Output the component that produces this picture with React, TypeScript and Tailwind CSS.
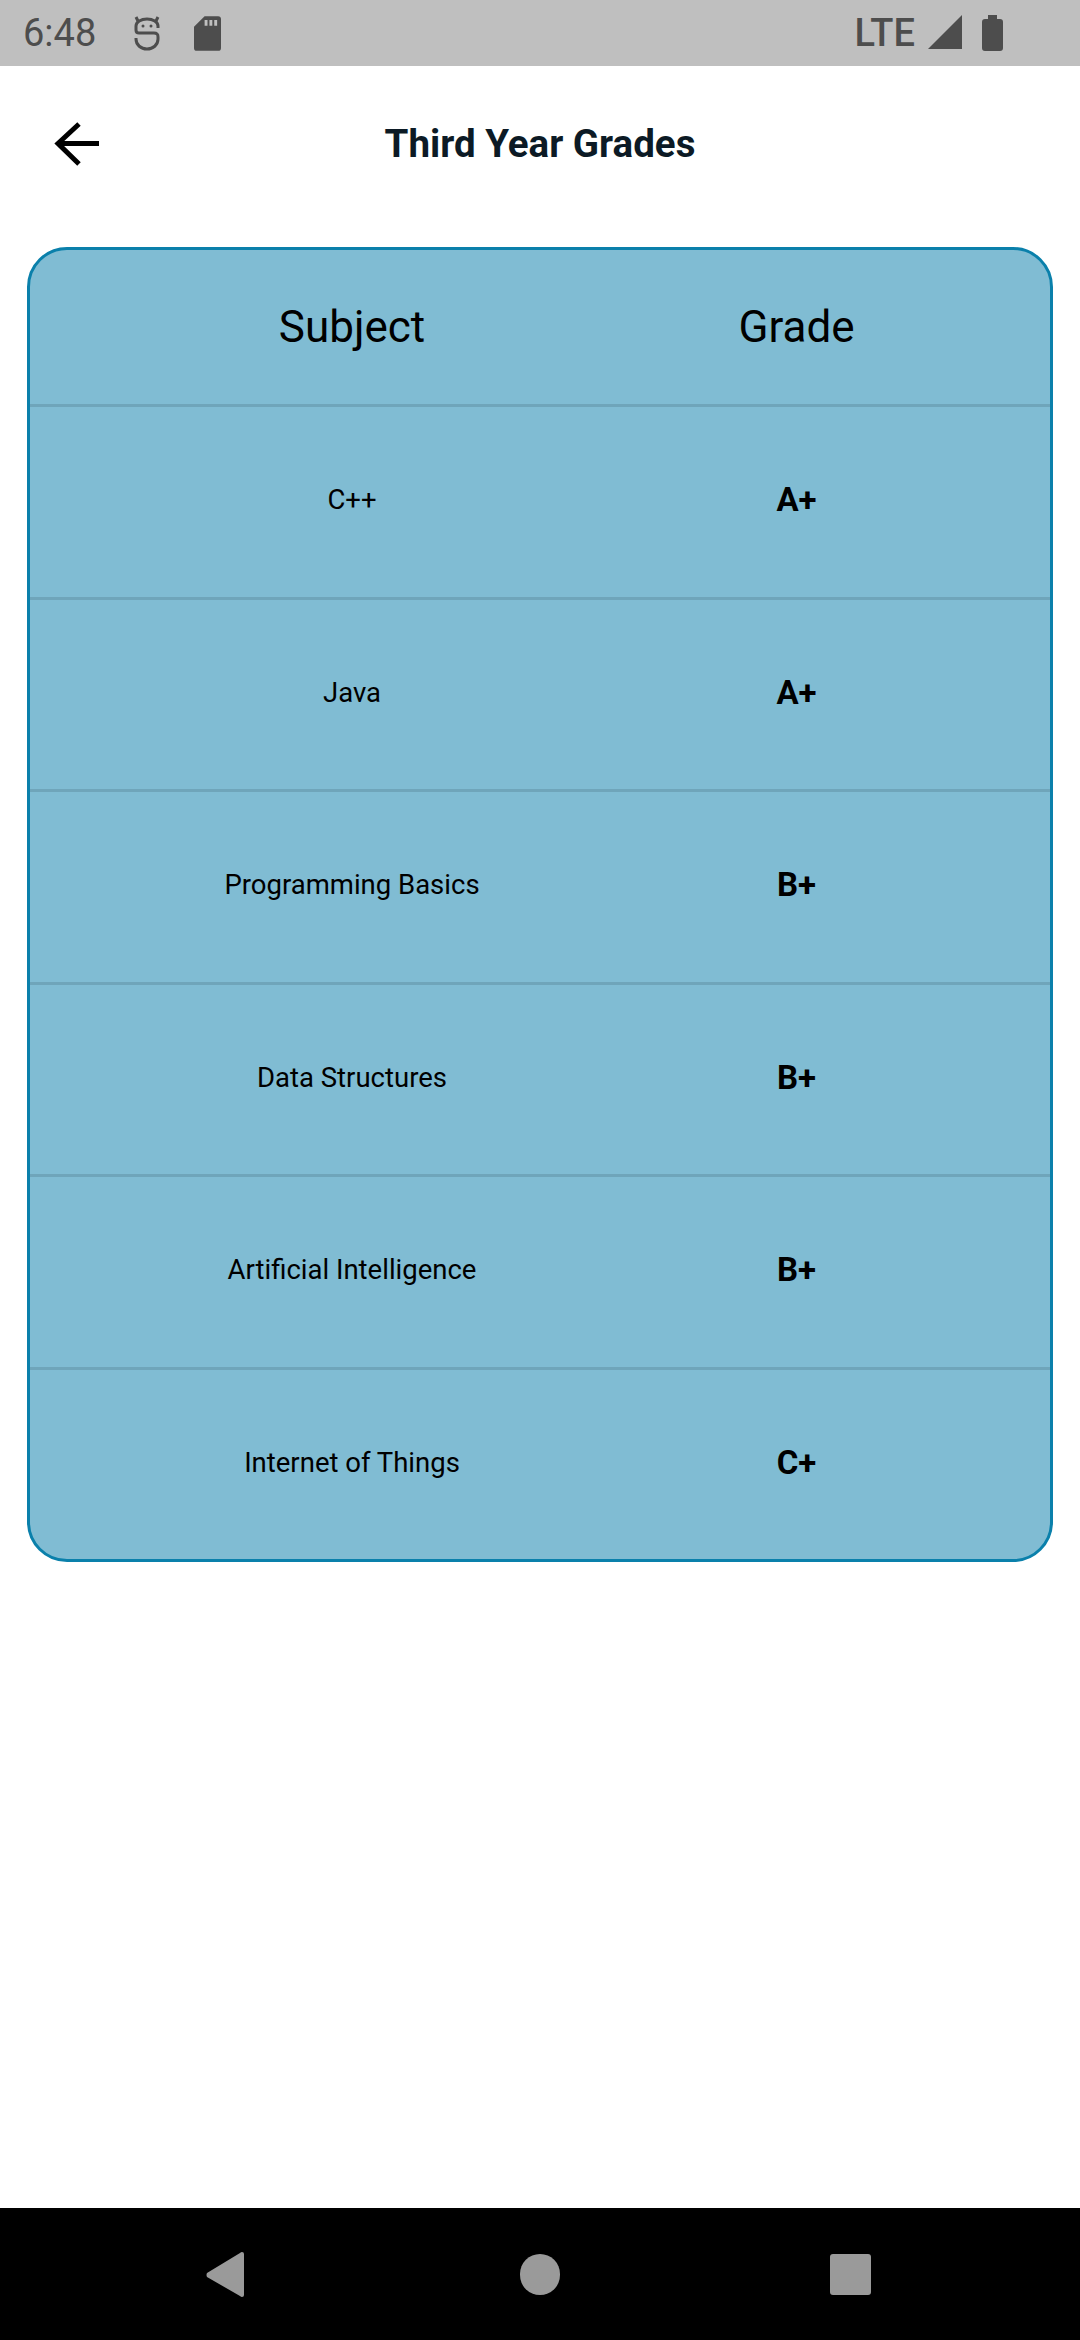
const ROWS = [
  { subject: "C++", grade: "A+" },
  { subject: "Java", grade: "A+" },
  { subject: "Programming Basics", grade: "B+" },
  { subject: "Data Structures", grade: "B+" },
  { subject: "Artificial Intelligence", grade: "B+" },
  { subject: "Internet of Things", grade: "C+" },
];

function StatusBar() {
  return (
    <div className="flex h-[66px] items-center bg-[#bfbfbf] text-[#4d4d4d]">
      <span className="ml-[23px] w-[76px] text-[38px] leading-none font-[Roboto]">6:48</span>
      <svg className="ml-[35px] h-[36px] w-[26px]" viewBox="0 0 26 36" fill="none" stroke="currentColor" strokeWidth="3">
        <path d="M24 13 V11 C24 7 19 4 13 4 C7 4 2 7 2 11 V15 C2 17 3 18 5 18 H20 C23 18 24 19 24 22 V24 C24 30 19 34 13 34 C7 34 2 30 2 24 V23" />
        <path d="M4 6 L2 2 M22 6 L24 2" />
        <circle cx="9" cy="11" r="1.500" fill="currentColor" stroke="none" />
        <circle cx="17" cy="11" r="1.500" fill="currentColor" stroke="none" />
      </svg>
      <svg className="ml-[34px] h-[35px] w-[27px]" viewBox="0 0 28 36" fill="currentColor">
        <path
          d="M11 0 H25 a3 3 0 0 1 3 3 V33 a3 3 0 0 1 -3 3 H3 a3 3 0 0 1 -3 -3 V11 Z M11 4 v6 h3 v-6 Z M16 4 v6 h3 v-6 Z M21 4 v6 h3 v-6 Z"
          fillRule="evenodd"
        />
      </svg>
      <span className="ml-auto text-[38px] leading-none font-medium font-[Roboto]">LTE</span>
      <svg className="ml-[13px] h-[36px] w-[34px]" viewBox="0 0 34 36" fill="currentColor">
        <path d="M34 0 V34 H0 Z" />
      </svg>
      <svg className="mr-[77px] ml-[20px] h-[36px] w-[21px]" viewBox="0 0 21 36" fill="currentColor">
        <path d="M6 0 H15 V4 H18 a3 3 0 0 1 3 3 V33 a3 3 0 0 1 -3 3 H3 a3 3 0 0 1 -3 -3 V7 a3 3 0 0 1 3 -3 H6 Z" />
      </svg>
    </div>
  );
}

function Header() {
  return (
    <div className="relative flex h-[156px] items-center justify-center">
      <svg className="absolute top-[56px] left-[54px] h-[44px] w-[46px]" viewBox="0 0 46 44" fill="none" stroke="black" strokeWidth="5">
        <path d="M45 21.500 H4" />
        <path d="M25 2 L4 21.500 L25 42" />
      </svg>
      <h1 className="text-[38.500px] leading-none font-bold text-[#0c1a25] font-[Roboto]">Third Year Grades</h1>
    </div>
  );
}

function GradesCard() {
  return (
    <div className="mx-[27px] mt-[25px] overflow-hidden rounded-[40px] border-[3px] border-[#0a80ab] bg-[#80bcd3] font-[Roboto] text-black">
      <div className="grid h-[154px] grid-cols-[644px_245px] items-center pb-[1px] text-center text-[44px]">
        <span>Subject</span>
        <span>Grade</span>
      </div>
      {ROWS.map((row) => (
        <div
          key={row.subject}
          className="grid h-[192.500px] grid-cols-[644px_245px] items-center border-t-[3px] border-[#6fa5ba] pb-[4px] text-center"
        >
          <span className="text-[27.500px]">{row.subject}</span>
          <span className="text-[33px] font-bold">{row.grade}</span>
        </div>
      ))}
    </div>
  );
}

function NavBar() {
  return (
    <div className="flex h-[132px] items-center bg-black">
      <svg className="ml-[206px] h-[45px] w-[38px]" viewBox="0 0 38 45" fill="#9a9a9a">
        <path d="M36 0 Q38 0 38 2 V43 Q38 45 36 45 Q35 45 34 44 L1 25 Q0 23 1 21 L34 1 Q35 0 36 0 Z" />
      </svg>
      <div className="ml-[276px] h-[41px] w-[40px] rounded-full bg-[#9a9a9a]" />
      <div className="ml-[270px] h-[41px] w-[41px] rounded-[3px] bg-[#9a9a9a]" />
    </div>
  );
}

export default function App() {
  return (
    <div className="flex h-[2340px] w-[1080px] flex-col bg-white">
      <StatusBar />
      <Header />
      <GradesCard />
      <div className="flex-1" />
      <NavBar />
    </div>
  );
}
